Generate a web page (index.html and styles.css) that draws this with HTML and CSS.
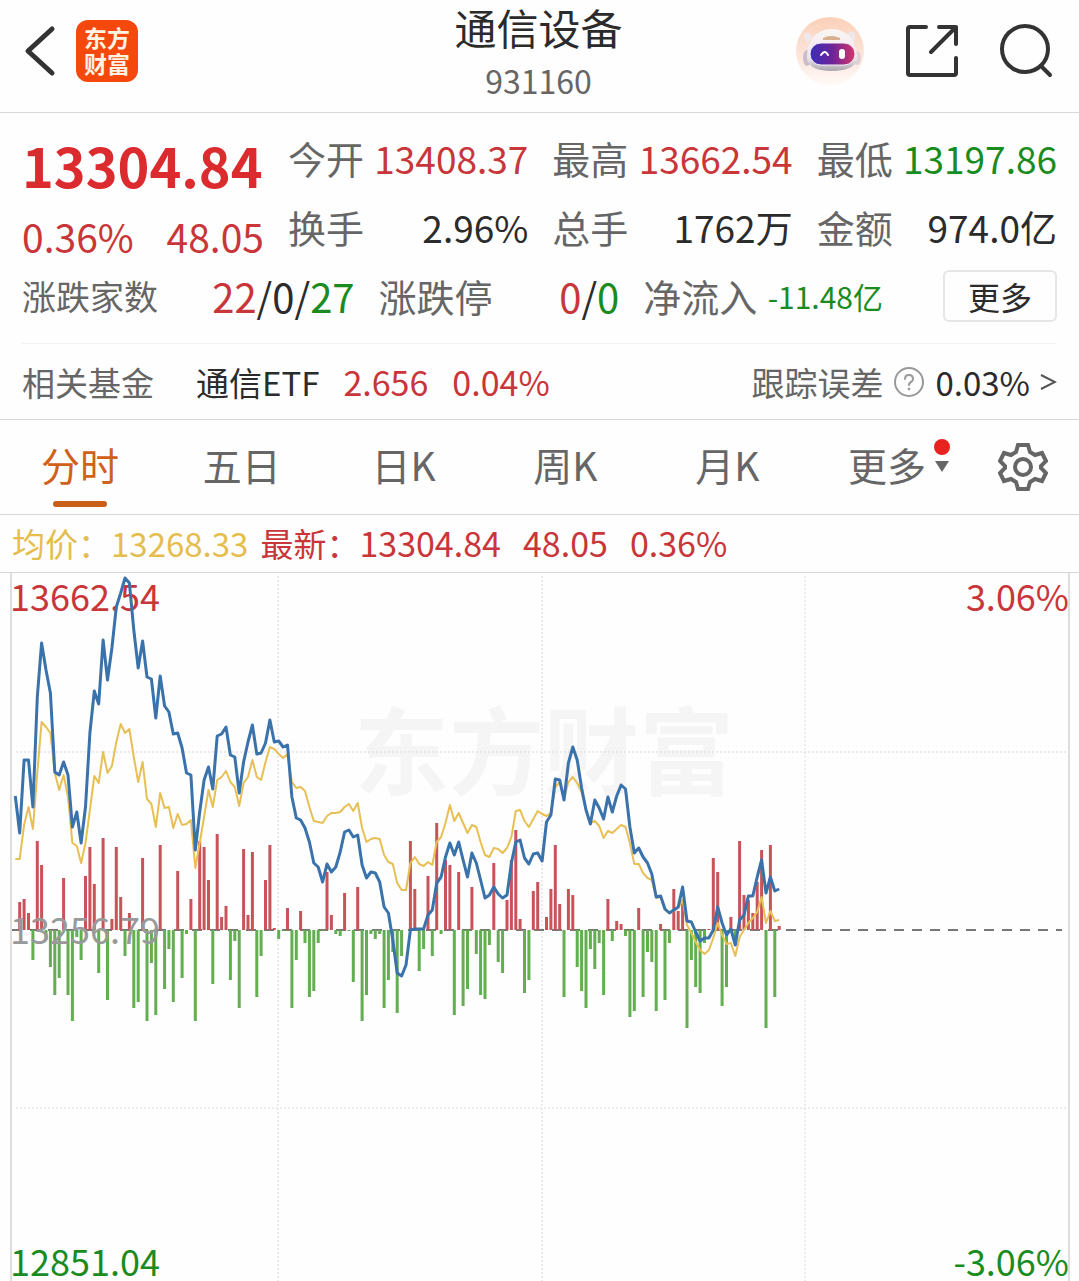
FILE: index.html
```html
<!DOCTYPE html>
<html lang="zh-CN">
<head>
<meta charset="utf-8">
<meta name="viewport" content="width=device-width, initial-scale=1">
<title>通信设备 931160</title>
<link rel="stylesheet" href="styles.css">
</head>
<body>
<header class="topbar">
  <div class="topbar-left">
    <button class="icon-btn" aria-label="返回">
      <svg width="32" height="52" viewBox="0 0 32 52"><path d="M28 4 4 26l24 22" fill="none" stroke="#333" stroke-width="5" stroke-linecap="round" stroke-linejoin="round"/></svg>
    </button>
    <a class="brand" href="#">东方<br>财富</a>
  </div>
  <div class="heading">
    <h1 class="title">通信设备</h1>
    <p class="code">931160</p>
  </div>
  <div class="topbar-right">
    <button class="icon-btn" aria-label="智能助手">
      <svg width="70" height="70" viewBox="0 0 70 70">
        <defs>
          <linearGradient id="halo" x1="0" y1="0" x2="0" y2="1"><stop offset="0" stop-color="#fbd0b8"/><stop offset=".6" stop-color="#fce6dc"/><stop offset="1" stop-color="#fffaf8"/></linearGradient>
          <linearGradient id="visor" x1="0" y1="0" x2="1" y2="0"><stop offset="0" stop-color="#3a2fb8"/><stop offset=".5" stop-color="#6d2399"/><stop offset="1" stop-color="#d4386a"/></linearGradient>
          <linearGradient id="shell" x1="0" y1="0" x2="0" y2="1"><stop offset="0" stop-color="#fbf6f5"/><stop offset=".7" stop-color="#ece6ec"/><stop offset="1" stop-color="#a9a3ad"/></linearGradient>
        </defs>
        <circle cx="35" cy="35" r="34" fill="url(#halo)"/>
        <path d="M9 17q5-2 9 4l-6 6q-4-5-3-10zM59 16q-5-1-9 4l8 8q4-6 1-12z" fill="#efe7e8"/>
        <ellipse cx="12" cy="42" rx="4" ry="8" fill="#c9bfca"/><ellipse cx="62" cy="42" rx="4" ry="7" fill="#ded2d8"/>
        <path d="M12 40Q13 15 36 13q23 1 26 25 3 17-27 17-24-1-23-15z" fill="url(#shell)"/>
        <path d="M28 22q8-4 17 0v2H28z" fill="#d9b08f"/>
        <rect x="15" y="27" width="45" height="22" rx="11" fill="url(#visor)" stroke="#f4eef6" stroke-width="1"/>
        <path d="M26 39q4-6 7 0" fill="none" stroke="#fff" stroke-width="2" stroke-linecap="round"/>
        <rect x="44" y="33" width="6" height="10" rx="3" fill="#fff"/>
      </svg>
    </button>
    <button class="icon-btn" aria-label="分享">
      <svg width="54" height="54" viewBox="0 0 54 54" fill="none" stroke="#333" stroke-width="4" stroke-linecap="round" stroke-linejoin="round"><path d="M21 3H5Q3 3 3 5v44q0 2 2 2h44q2 0 2-2V34M34 3h17v17M51 3 26 28"/></svg>
    </button>
    <button class="icon-btn" aria-label="搜索">
      <svg width="54" height="54" viewBox="0 0 54 54" fill="none" stroke="#333" stroke-width="4" stroke-linecap="round"><circle cx="26" cy="25" r="23"/><path d="m42 42 9 9"/></svg>
    </button>
  </div>
</header>

<main>
  <section class="quote">
    <div class="summary">
      <div class="last">
        <strong class="price">13304.84</strong>
        <div class="change up"><span>0.36%</span><span>48.05</span></div>
      </div>
      <dl class="stats">
        <div class="stat"><dt>今开</dt><dd class="up">13408.37</dd></div>
        <div class="stat"><dt>最高</dt><dd class="up">13662.54</dd></div>
        <div class="stat"><dt>最低</dt><dd class="down">13197.86</dd></div>
        <div class="stat"><dt>换手</dt><dd>2.96%</dd></div>
        <div class="stat"><dt>总手</dt><dd>1762万</dd></div>
        <div class="stat"><dt>金额</dt><dd>974.0亿</dd></div>
      </dl>
    </div>
    <div class="breadth">
      <dl class="breadth-list">
        <div class="stat"><dt class="dense">涨跌家数</dt><dd class="count"><span class="up">22</span>/0/<span class="down">27</span></dd></div>
        <div class="stat"><dt>涨跌停</dt><dd class="count"><span class="up">0</span>/<span class="down">0</span></dd></div>
        <div class="stat"><dt>净流入</dt><dd class="down small">-11.48亿</dd></div>
      </dl>
      <button class="more-btn">更多</button>
    </div>
    <div class="fund">
      <span class="muted">相关基金</span>
      <a class="fund-link" href="#"><span>通信ETF</span><span class="figure up">2.656</span><span class="figure up">0.04%</span></a>
      <a class="tracking" href="#">
        <span class="muted">跟踪误差</span>
        <svg width="32" height="32" viewBox="0 0 32 32" fill="none" stroke="#999" stroke-width="2"><circle cx="16" cy="16" r="14"/><path d="M12 13q0-4 4-4t4 4q0 2-2 3t-2 3" stroke-linecap="round"/><circle cx="16" cy="23" r="1" fill="#999" stroke-width="1"/></svg>
        <span>0.03%</span>
        <svg width="17" height="18" viewBox="0 0 17 18"><path d="m1 2 14 7-14 7" fill="none" stroke="#555" stroke-width="2"/></svg>
      </a>
    </div>
  </section>

  <nav class="tabs">
    <button class="tab active">分时</button>
    <button class="tab">五日</button>
    <button class="tab">日K</button>
    <button class="tab">周K</button>
    <button class="tab">月K</button>
    <button class="tab"><span class="tab-more">更多<i class="dot"></i><i class="caret"></i></span></button>
    <button class="settings" aria-label="设置">
      <svg width="50" height="50" viewBox="0 0 50 50" fill="none" stroke="#666" stroke-width="4" stroke-linejoin="miter"><path d="M20 3h10l2 7 5 3 7-2 4 8-5 5v2l5 5-4 8-7-2-5 3-2 7H20l-2-7-5-3-7 2-4-8 5-5v-2l-5-5 4-8 7 2 5-3z"/><circle cx="25" cy="25" r="8"/></svg>
    </button>
  </nav>

  <section class="legend">
    <span class="avg">均价：13268.33</span>
    <span class="latest up"><span>最新：<span class="figure">13304.84</span></span><span class="figure">48.05</span><span class="figure">0.36%</span></span>
  </section>

  <section class="chart">
    <svg class="plot" viewBox="0 573 1079 708" role="img" aria-label="分时走势图">
      <g class="watermark"><text x="354" y="788">东方财富</text></g>
      <g class="frame"><path d="M11 573V1281M1069 573V1281"/></g>
      <g class="grid"><path d="M278 576V1281M542 576V1281M805 576V1281M16 752H1068M16 1108H1068"/></g>
      <path class="zero" d="M12 930H1062"/>
      <g class="scale">
        <text class="scale-up" x="10" y="611">13662.54</text>
        <text class="scale-up" x="1069" y="611" text-anchor="end">3.06%</text>
        <text class="scale-down" x="10" y="1276">12851.04</text>
        <text class="scale-down" x="1069" y="1276" text-anchor="end">-3.06%</text>
      </g>
      <path class="bar-up" id="bars-up"/>
      <path class="bar-down" id="bars-down"/>
      <g class="scale"><text class="scale-mid" x="10" y="944">13256.79</text></g>
      <polyline class="line-avg" id="line-avg"/>
      <polyline class="line-price" id="line-price"/>
    </svg>
  </section>
</main>
<script src="chart.js"></script>
</body>
</html>
```
FILE: styles.css
```css
* { box-sizing: border-box; }

body {
  margin: 0;
  background: #fefefe;
  color: #2b2b2b;
  font-family: "Noto Sans CJK SC", "Noto Sans", sans-serif;
  font-size: 37px;
}

h1, p, dl, dd { margin: 0; font-weight: 400; }
a { color: inherit; text-decoration: none; }
button { padding: 0; border: 0; background: none; color: inherit; font: inherit; cursor: pointer; }
svg { display: block; }

.up { color: #c9363a; }
.down { color: #1a8c1f; }
.muted { color: #666; }
.figure { font-size: 34px; }

/* Header */
.topbar {
  display: grid;
  grid-template-columns: 1fr auto 1fr;
  height: 113px;
  padding: 0 26px 0 24px;
  border-bottom: 1px solid #d8d8d8;
}
.topbar-left, .topbar-right { display: flex; align-items: center; height: 102px; }
.topbar-left { gap: 20px; }
.topbar-right { justify-content: flex-end; gap: 40px; }
.brand {
  width: 62px;
  height: 62px;
  padding-top: 4px;
  border-radius: 12px;
  background: #f4480c;
  color: #fff3e4;
  font-size: 23px;
  font-weight: 700;
  line-height: 26px;
  text-align: center;
}
.heading { padding-top: 1px; text-align: center; }
.title { font-size: 42px; line-height: 52px; }
.code { color: #666; font-size: 32px; line-height: 54px; }

/* Quote panel */
.quote { padding: 10px 22px 0; border-bottom: 1px solid #d8d8d8; }
.summary { display: grid; grid-template-columns: 242px 1fr; align-items: start; gap: 24px; }
.last { padding-top: 4px; }
.price { display: block; color: #dc2b2f; font-size: 54px; font-weight: 700; line-height: 75px; }
.change { display: flex; justify-content: space-between; font-size: 39px; line-height: 68px; }
.stats { display: grid; grid-template-columns: repeat(3, 1fr); grid-auto-rows: 69px; column-gap: 24px; line-height: 68px; }
.stat { display: flex; justify-content: space-between; align-items: center; white-space: nowrap; }
.stat dt { color: #666; font-size: 38px; }
.stat .dense { font-size: 34px; }
.stat .small { font-size: 30px; }
.stat .count { font-size: 40px; }
.breadth { display: flex; justify-content: space-between; align-items: center; height: 52px; }
.breadth-list { display: grid; grid-template-columns: 333fr 241fr 240fr; column-gap: 24px; flex: 1; line-height: 50px; }
.more-btn {
  width: 114px;
  height: 52px;
  margin-left: 60px;
  border: 2px solid #e6e6e6;
  border-radius: 6px;
  font-size: 32px;
  line-height: 44px;
}
.fund {
  display: flex;
  align-items: center;
  height: 76px;
  margin-top: 21px;
  border-top: 1px solid #f2f2f2;
  font-size: 33px;
  white-space: nowrap;
}
.fund-link { display: flex; align-items: center; gap: 24px; margin-left: 42px; }
.tracking { display: flex; align-items: center; gap: 10px; margin-left: auto; }

/* Period tabs */
.tabs {
  display: grid;
  grid-template-columns: repeat(5, 15%) 1fr 112px;
  height: 95px;
  border-bottom: 1px solid #d8d8d8;
  color: #666;
  font-size: 39px;
}
.tab, .settings { position: relative; display: flex; align-items: center; justify-content: center; }
.tab { padding: 0 2px 6px 0; }
.active { color: #d0601a; }
.active::after {
  content: "";
  position: absolute;
  bottom: 7px;
  width: 54px;
  height: 6px;
  border-radius: 3px;
  background: #c8601c;
}
.tab-more { position: relative; }
.dot {
  position: absolute;
  top: 3px;
  right: -24px;
  width: 16px;
  height: 16px;
  border-radius: 50%;
  background: #e8221f;
}
.caret {
  position: absolute;
  top: 25px;
  right: -23px;
  border: 7px solid transparent;
  border-top: 11px solid #666;
  border-bottom: 0;
}

/* Legend line above the chart */
.legend {
  display: flex;
  gap: 12px;
  height: 58px;
  padding-left: 12px;
  border-bottom: 1px solid #d8d8d8;
  font-size: 33px;
  line-height: 56px;
  white-space: nowrap;
}
.avg { color: #e5bd4e; }
.latest { display: flex; gap: 22px; }

/* Intraday chart */
.plot { width: 100%; height: auto; overflow: visible; }
.watermark { fill: #f5f5f5; font-size: 95px; font-weight: 700; }
.frame { fill: none; stroke: #dedede; stroke-width: 2; }
.grid { fill: none; stroke: #d9d9d9; stroke-width: 1; stroke-dasharray: 2 2; }
.zero { fill: none; stroke: #777; stroke-width: 2; stroke-dasharray: 10 8; }
.scale { font-size: 36px; }
.scale-up { fill: #c9363a; }
.scale-mid { fill: #999; }
.scale-down { fill: #1a8c1f; }
.bar-up { fill: none; stroke: #c8545a; stroke-width: 3; }
.bar-down { fill: none; stroke: #62ae50; stroke-width: 3; }
.line-avg { fill: none; stroke: #e8bf55; stroke-width: 2; stroke-linejoin: round; }
.line-price { fill: none; stroke: #3a72ab; stroke-width: 3; stroke-linejoin: round; }
```
FILE: chart.js
```js
// One entry per trading minute, in plot units; 930 is the previous close.
const START = 15.3;
const STEP = 4.39;
const BASE = 930;

const price = [
  796,833,760,760,807,697,643,670,693,772,775,762,775,827,812,843,807,733,691,704,
  640,680,648,607,593,578,583,630,668,641,677,679,718,676,706,712,734,733,748,773,
  775,850,812,780,767,789,736,734,727,755,757,793,762,742,725,754,753,743,720,742,
  741,747,745,797,818,820,828,842,863,867,882,864,872,867,852,832,830,837,835,865,
  878,872,873,882,907,913,940,973,976,965,930,929,929,929,915,910,883,877,857,843,
  855,842,860,877,853,863,880,898,895,887,894,898,895,863,842,840,858,864,854,853,
  861,822,815,779,780,800,763,747,760,788,810,824,800,808,819,797,812,796,785,789,
  827,853,848,857,863,874,897,896,909,913,910,907,887,921,922,932,941,938,938,930,
  907,923,935,929,945,920,915,896,896,877,860,893,877,891,889
];

const average = [
  859,859,825,807,829,773,722,727,733,773,790,775,797,843,846,863,843,810,776,783,
  752,773,766,742,724,733,729,757,782,762,799,804,827,793,808,807,828,814,825,824,
  820,868,843,817,790,807,780,777,771,782,787,806,783,777,760,777,780,762,747,749,
  754,758,754,782,788,787,791,807,821,822,823,816,813,813,812,807,804,811,803,828,
  842,839,838,839,855,862,864,883,890,890,863,857,864,866,862,865,842,837,823,805,
  821,813,823,833,825,827,842,855,857,848,849,853,848,837,811,810,821,827,819,811,
  814,816,813,787,782,799,782,777,783,792,810,823,821,826,838,831,833,829,825,827,
  843,864,864,873,878,880,898,897,910,913,911,908,900,925,933,942,950,954,950,938,
  923,935,944,943,956,937,930,923,918,912,897,923,911,921,920
];

const flow = [
  0,28,31,17,-30,89,65,-10,-37,-65,-48,52,-65,-91,-7,-30,54,83,46,-43,
  92,-70,11,83,33,-26,17,-78,-72,72,-91,-33,-85,85,-59,-19,-72,59,-48,-4,
  31,-91,89,83,50,-54,96,13,24,-50,-11,-78,81,15,78,-67,-26,50,85,2,
  -9,-1,22,-78,-30,19,-13,-67,-61,-13,-1,58,15,-4,-6,37,-1,-52,43,-91,
  -65,-4,-9,-4,-78,-50,-22,-83,-26,0,89,41,-41,-19,54,-26,107,-4,70,65,
  -85,58,-76,-59,43,-24,-65,-69,-15,67,-32,-43,30,70,100,11,-63,-50,39,48,
  0,13,41,85,26,-67,41,35,-37,-61,-78,-19,-39,-13,-65,31,-11,9,6,-6,
  -87,-81,22,-67,-22,-32,-81,6,-70,-13,41,19,30,-98,-30,-57,-63,-13,1,72,
  58,-76,-57,13,-11,89,35,30,17,48,80,-98,85,-67,4
];

const x = (i) => (START + i * STEP).toFixed(1);
const points = (values) => values.map((y, i) => x(i) + "," + y).join(" ");
const bars = (sign) => flow
  .map((v, i) => (v * sign > 0 ? "M" + x(i) + " " + BASE + "V" + (BASE - v) : ""))
  .join("");

document.getElementById("line-price").setAttribute("points", points(price));
document.getElementById("line-avg").setAttribute("points", points(average));
document.getElementById("bars-up").setAttribute("d", bars(1));
document.getElementById("bars-down").setAttribute("d", bars(-1));
```
